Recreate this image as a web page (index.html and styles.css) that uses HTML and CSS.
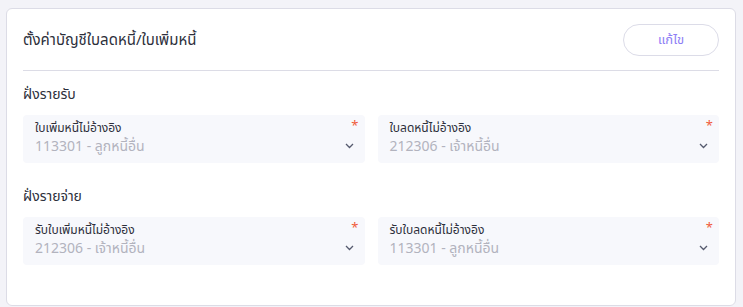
FILE: index.html
```html
<!DOCTYPE html>
<html lang="th">
<head>
<meta charset="utf-8">
<link rel="stylesheet" href="styles.css">
</head>
<body>
<div class="card">
  <div class="card-head">
    <div class="title">ตั้งค่าบัญชีใบลดหนี้/ใบเพิ่มหนี้</div>
    <button class="btn">แก้ไข</button>
  </div>
  <div class="divider"></div>
  <div class="section">
    <div class="section-title">ฝั่งรายรับ</div>
    <div class="grid">
      <div class="field">
        <div class="label">ใบเพิ่มหนี้ไม่อ้างอิง</div>
        <div class="value">113301 - ลูกหนี้อื่น</div>
        <span class="req">*</span>
        <svg class="chev" width="9" height="6" viewBox="0 0 9 6"><path d="M1 1l3.5 3.5L8 1" fill="none" stroke="#555a6e" stroke-width="1.3"/></svg>
      </div>
      <div class="field">
        <div class="label">ใบลดหนี้ไม่อ้างอิง</div>
        <div class="value">212306 - เจ้าหนี้อื่น</div>
        <span class="req">*</span>
        <svg class="chev" width="9" height="6" viewBox="0 0 9 6"><path d="M1 1l3.5 3.5L8 1" fill="none" stroke="#555a6e" stroke-width="1.3"/></svg>
      </div>
    </div>
  </div>
  <div class="section">
    <div class="section-title">ฝั่งรายจ่าย</div>
    <div class="grid">
      <div class="field">
        <div class="label">รับใบเพิ่มหนี้ไม่อ้างอิง</div>
        <div class="value">212306 - เจ้าหนี้อื่น</div>
        <span class="req">*</span>
        <svg class="chev" width="9" height="6" viewBox="0 0 9 6"><path d="M1 1l3.5 3.5L8 1" fill="none" stroke="#555a6e" stroke-width="1.3"/></svg>
      </div>
      <div class="field">
        <div class="label">รับใบลดหนี้ไม่อ้างอิง</div>
        <div class="value">113301 - ลูกหนี้อื่น</div>
        <span class="req">*</span>
        <svg class="chev" width="9" height="6" viewBox="0 0 9 6"><path d="M1 1l3.5 3.5L8 1" fill="none" stroke="#555a6e" stroke-width="1.3"/></svg>
      </div>
    </div>
  </div>
</div>
</body>
</html>
```
FILE: styles.css
```css
html, body {
  margin: 0;
  padding: 0;
  background: #f3f3f8;
}
body {
  padding: 8px 8px 0 6px;
  font-family: "Noto Sans Thai", "Noto Sans Thai UI", "Noto Sans", sans-serif;
  color: #2d2f3b;
}
.card {
  background: #fff;
  border: 1px solid #dcdce6;
  border-radius: 6px;
  height: 298px;
  padding: 0 16px 0 16px;
  box-sizing: border-box;
  width: 730px;
}
.card-head {
  display: flex;
  align-items: center;
  justify-content: space-between;
  height: 61px;
}
.title {
  font-size: 15px;
  color: #2d2f3b;
  padding-top: 2px;
}
.btn {
  width: 96px;
  height: 32px;
  border: 1px solid #dcdce8;
  border-radius: 16px;
  background: #fff;
  color: #8d7ef5;
  font-family: inherit;
  font-size: 13px;
  padding: 0;
}
.divider {
  height: 1px;
  background: #dcdce6;
}
.section-title {
  font-size: 14px;
  font-weight: 400;
  margin-top: 14px;
  height: 20px;
  line-height: 20px;
  color: #2d2f3b;
}
.grid {
  display: grid;
  grid-template-columns: 1fr 1fr;
  gap: 13px;
  margin-top: 10px;
}
.field {
  position: relative;
  background: #f7f8fc;
  border-radius: 4px;
  height: 48px;
  padding: 4px 12px;
  box-sizing: border-box;
}
.label {
  font-size: 12px;
  line-height: 18px;
  color: #2d2f3b;
}
.value {
  font-size: 14px;
  line-height: 20px;
  color: #b2b3be;
}
.req {
  position: absolute;
  top: 1px;
  right: 6px;
  color: #f05a3a;
  font-size: 13px;
}
.chev {
  position: absolute;
  right: 11px;
  top: 28px;
}
.section + .section {
  margin-top: 24px;
}
```
